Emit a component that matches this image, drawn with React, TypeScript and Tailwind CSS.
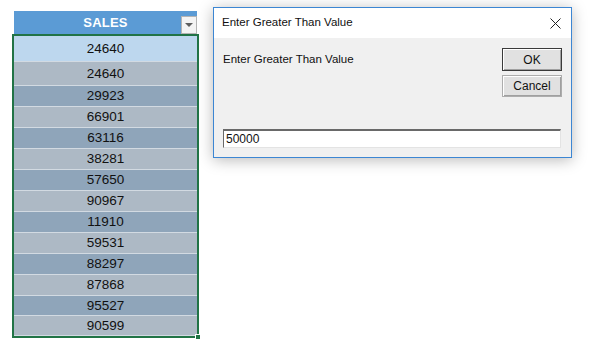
import React from "react"

const sales = [
  24640, 24640, 29923, 66901, 63116, 38281, 57650, 90967, 11910, 59531, 88297, 87868, 95527, 90599,
]

function rowClass(i: number) {
  if (i === 0) return "h-[26px] bg-[#bdd7ee]"
  if (i === 1) return "h-[24px] bg-[#adb9c5]"
  const h = i >= 12 ? "h-[20px]" : "h-[21px]"
  return i % 2 === 0 ? `${h} bg-[#8fa5ba]` : `${h} bg-[#adb9c5]`
}

function SalesTable() {
  return (
    <div className="ml-[12px] mt-[11px] w-[187px]">
      {/* header */}
      <div className="relative mx-[2px] flex h-[23px] items-center justify-center bg-[#5b9bd5]">
        <span className="text-[13px] font-bold tracking-[0.2px] text-white">SALES</span>
        <div className="absolute bottom-0 right-0 flex h-[18px] w-[16px] items-center justify-center border border-[#b4b4b4] bg-[#f4f4f4]">
          <div className="h-0 w-0 border-l-[4px] border-r-[4px] border-t-[4px] border-l-transparent border-r-transparent border-t-[#5f5f5f]" />
        </div>
      </div>
      {/* selected range */}
      <div className="relative border-2 border-[#217346]">
        {sales.map((v, i) => (
          <div
            key={i}
            className={`${rowClass(i)} flex items-center justify-center border-b border-[#d2dae2] pt-[1px] text-[13.5px] text-[#111] last:border-b-0`}
          >
            {v}
          </div>
        ))}
        <div className="absolute -bottom-[4px] -right-[4px] h-[6px] w-[6px] border border-white bg-[#217346]" />
      </div>
    </div>
  )
}

function Dialog() {
  return (
    <div className="ml-[14px] mt-[7px] w-[359px] border border-[#3c86d3] bg-[#f0f0f0] shadow-[0_2px_14px_rgba(0,0,0,0.28)]">
      <div className="flex h-[30px] items-center justify-between bg-white pl-[8px] pr-[9px]">
        <span className="text-[11.5px] text-[#111]">Enter Greater Than Value</span>
        <svg width="11" height="11" viewBox="0 0 11 11" className="mr-[1px]">
          <path d="M0.5 0.5 L10.5 10.5 M10.5 0.5 L0.5 10.5" stroke="#222" strokeWidth="1" />
        </svg>
      </div>
      <div className="px-[9px] pb-[9px] pt-[10px]">
        <div className="flex items-start justify-between">
          <span className="mt-[3px] text-[11.5px] text-[#111]">Enter Greater Than Value</span>
          <div className="flex w-[60px] flex-col gap-[4px]">
            <button className="flex h-[23px] items-center justify-center border border-[#3a3a3a] bg-[#e1e1e1] text-[12px] text-[#111] shadow-[inset_1px_1px_0_#fff,inset_-1px_-1px_0_#a0a0a0]">
              OK
            </button>
            <button className="flex h-[22px] items-center justify-center border border-[#adadad] bg-[#e1e1e1] text-[12px] text-[#111] shadow-[inset_1px_1px_0_#fff,inset_-1px_-1px_0_#a0a0a0]">
              Cancel
            </button>
          </div>
        </div>
        <div className="mr-[1px] mt-[32px] flex h-[19px] items-center border-b border-l border-r border-t-2 border-b-[#e3e3e3] border-l-[#696969] border-r-[#e3e3e3] border-t-[#696969] bg-white pl-[2px] text-[12px] text-[#111]">
          50000
        </div>
      </div>
    </div>
  )
}

export default function App() {
  return (
    <div
      className="flex h-[346px] w-[593px] items-start overflow-hidden bg-white"
      style={{ fontFamily: '"Liberation Sans", Arial, sans-serif' }}
    >
      <SalesTable />
      <Dialog />
    </div>
  )
}
